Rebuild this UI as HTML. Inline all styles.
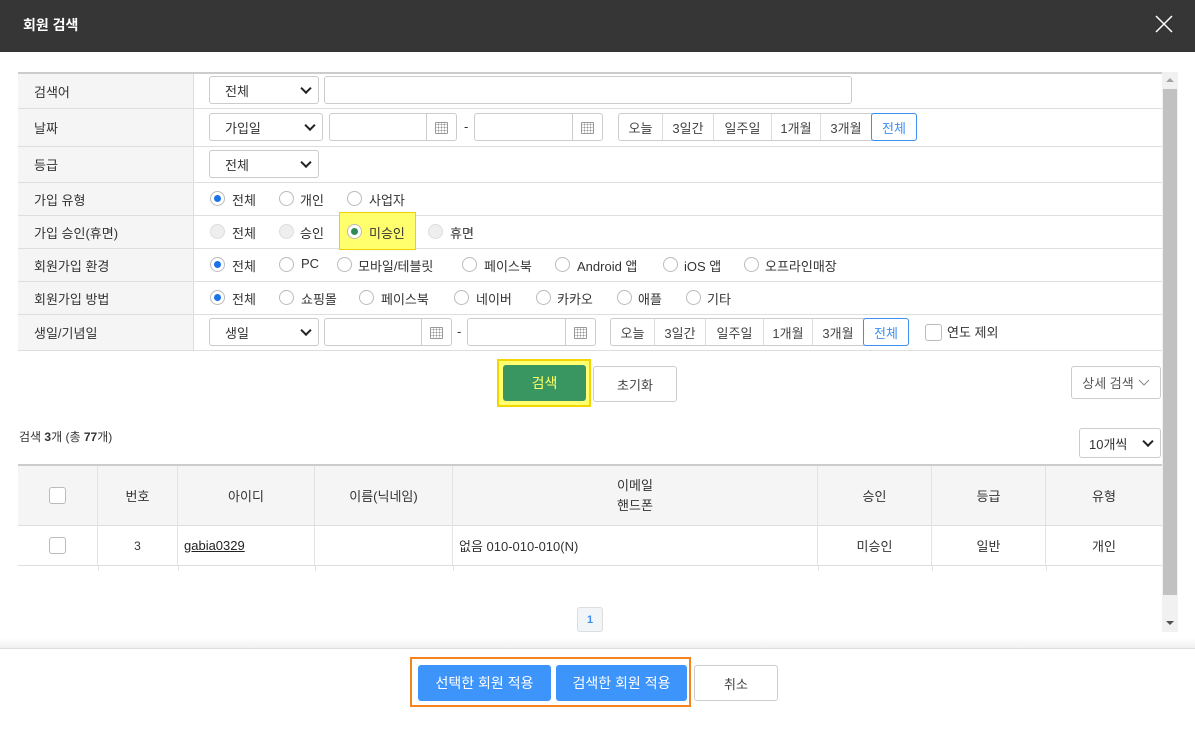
<!DOCTYPE html>
<html><head><meta charset="utf-8"><style>
*{box-sizing:border-box;margin:0;padding:0}
body{width:1195px;height:733px;position:relative;overflow:hidden;background:#fff;font-family:"Liberation Sans","Noto Sans CJK KR",sans-serif;font-size:13px;color:#333}
.a{position:absolute}
.hdr{left:0;top:0;width:1195px;height:52px;background:#363636}
.lbl{left:18px;width:176px;background:#f5f5f5;padding-left:16px;display:flex;align-items:center;border-right:1px solid #ddd}
.line{left:18px;width:1144px;height:1px;background:#dedede}
.sel{border:1px solid #ccc;border-radius:3px;background:#fff;display:flex;align-items:center;padding-left:15px}
.sel:after{content:"";position:absolute;right:8px;top:50%;width:6px;height:6px;border-right:2px solid #222;border-bottom:2px solid #222;transform:translateY(-70%) rotate(45deg)}
.inp{border:1px solid #ccc;border-radius:3px;background:#fff}
.cal{position:absolute;right:0;top:0;bottom:0;width:30px;border-left:1px solid #ccc}
.cal i{position:absolute;left:8px;top:8px;width:13px;height:12px;border:1px solid #999;border-radius:1px;background:radial-gradient(circle,#999 0.8px,transparent 1px) 1px 3px/3px 3px}
.grp{display:flex;border:1px solid #ccc;border-radius:3px;height:28px}
.grp span{display:flex;align-items:center;justify-content:center;border-right:1px solid #ddd;color:#444}
.grp span:last-child{border:1px solid #3d8ff0;color:#3d8ff0;border-radius:3px;margin:-1px}
.r{width:15px;height:15px;border:1px solid #bbb;border-radius:50%;background:#fff}
.r.on{border-color:#bbb}
.r.on:after{content:"";position:absolute;left:3px;top:3px;width:7px;height:7px;border-radius:50%;background:#1a73e8}
.r.g:after{background:#2e8b57}
.r.dis{background:#eee;border-color:#ddd}
.t{white-space:nowrap}
.btn{border:1px solid #ccc;border-radius:3px;background:#fff;display:flex;align-items:center;justify-content:center}
.th{top:466px;height:59px;display:flex;align-items:center;justify-content:center;border-right:1px solid #e3e3e3;background:#f5f5f5;color:#333}
.td{top:526px;height:39px;display:flex;align-items:center;justify-content:center;border-right:1px solid #e3e3e3}
.cb{width:17px;height:17px;border:1px solid #bbb;border-radius:3px;background:#fff}
</style></head><body>
<div class="a hdr"></div>
<div class="a t" style="left:23px;top:15px;color:#fff;font-weight:bold;font-size:14px">회원 검색</div>
<svg class="a" style="left:1155px;top:15px" width="18" height="18"><path d="M1 1L17 17M17 1L1 17" stroke="#fff" stroke-width="1.5"/></svg>

<!-- scrollbar -->
<div class="a" style="left:1162px;top:72px;width:16px;height:560px;background:#f1f1f1"></div>
<div class="a" style="left:1163px;top:89px;width:14px;height:506px;background:#c1c1c1"></div>
<svg class="a" style="left:1165px;top:77px" width="10" height="6"><path d="M1 5L5 1L9 5Z" fill="#a3a3a3"/></svg>
<svg class="a" style="left:1165px;top:620px" width="10" height="6"><path d="M1 1L5 5L9 1Z" fill="#505050"/></svg>

<!-- form table -->
<div class="a" style="left:18px;top:72px;width:1144px;height:2px;background:#ccc"></div>
<div class="a lbl" style="top:74px;height:34px">검색어</div>
<div class="a lbl" style="top:109px;height:37px">날짜</div>
<div class="a lbl" style="top:147px;height:35px">등급</div>
<div class="a lbl" style="top:183px;height:32px">가입 유형</div>
<div class="a lbl" style="top:216px;height:32px">가입 승인(휴면)</div>
<div class="a lbl" style="top:249px;height:32px">회원가입 환경</div>
<div class="a lbl" style="top:282px;height:32px">회원가입 방법</div>
<div class="a lbl" style="top:315px;height:35px">생일/기념일</div>
<div class="a line" style="top:108px"></div>
<div class="a line" style="top:146px"></div>
<div class="a line" style="top:182px"></div>
<div class="a line" style="top:215px"></div>
<div class="a line" style="top:248px"></div>
<div class="a line" style="top:281px"></div>
<div class="a line" style="top:314px"></div>
<div class="a line" style="top:350px"></div>

<div class="a sel" style="left:209px;top:76px;width:110px;height:28px">전체</div>
<div class="a inp" style="left:324px;top:76px;width:528px;height:28px"></div>

<div class="a sel" style="left:209px;top:113px;width:114px;height:28px">가입일</div>
<div class="a inp" style="left:329px;top:113px;width:128px;height:28px"><div class="cal"><i></i></div></div>
<div class="a" style="left:464px;top:119px">-</div>
<div class="a inp" style="left:474px;top:113px;width:129px;height:28px"><div class="cal"><i></i></div></div>
<div class="a grp" style="left:618px;top:113px;width:299px"><span style="width:44px">오늘</span><span style="width:51px">3일간</span><span style="width:58px">일주일</span><span style="width:49px">1개월</span><span style="width:51px">3개월</span><span style="width:46px">전체</span></div>

<div class="a sel" style="left:209px;top:150px;width:110px;height:28px">전체</div>

<!-- row 4 -->
<div class="a r on" style="left:210px;top:191px"></div><div class="a t" style="left:232px;top:190px">전체</div>
<div class="a r" style="left:279px;top:191px"></div><div class="a t" style="left:300px;top:190px">개인</div>
<div class="a r" style="left:347px;top:191px"></div><div class="a t" style="left:369px;top:190px">사업자</div>
<!-- row 5 -->
<div class="a r dis" style="left:210px;top:224px"></div><div class="a t" style="left:232px;top:223px">전체</div>
<div class="a r dis" style="left:279px;top:224px"></div><div class="a t" style="left:300px;top:223px">승인</div>
<div class="a" style="left:339px;top:212px;width:77px;height:38px;border:1px solid #f0d000;background:#ffff6e"></div>
<div class="a r on g" style="left:347px;top:224px"></div><div class="a t" style="left:369px;top:223px">미승인</div>
<div class="a r dis" style="left:428px;top:224px"></div><div class="a t" style="left:450px;top:223px">휴면</div>
<!-- row 6 -->
<div class="a r on" style="left:210px;top:257px"></div><div class="a t" style="left:232px;top:256px">전체</div>
<div class="a r" style="left:279px;top:257px"></div><div class="a t" style="left:301px;top:256px">PC</div>
<div class="a r" style="left:337px;top:257px"></div><div class="a t" style="left:358px;top:256px">모바일/테블릿</div>
<div class="a r" style="left:462px;top:257px"></div><div class="a t" style="left:484px;top:256px">페이스북</div>
<div class="a r" style="left:555px;top:257px"></div><div class="a t" style="left:577px;top:256px">Android 앱</div>
<div class="a r" style="left:663px;top:257px"></div><div class="a t" style="left:684px;top:256px">iOS 앱</div>
<div class="a r" style="left:744px;top:257px"></div><div class="a t" style="left:765px;top:256px">오프라인매장</div>
<!-- row 7 -->
<div class="a r on" style="left:210px;top:290px"></div><div class="a t" style="left:232px;top:289px">전체</div>
<div class="a r" style="left:279px;top:290px"></div><div class="a t" style="left:301px;top:289px">쇼핑몰</div>
<div class="a r" style="left:359px;top:290px"></div><div class="a t" style="left:381px;top:289px">페이스북</div>
<div class="a r" style="left:454px;top:290px"></div><div class="a t" style="left:476px;top:289px">네이버</div>
<div class="a r" style="left:536px;top:290px"></div><div class="a t" style="left:557px;top:289px">카카오</div>
<div class="a r" style="left:617px;top:290px"></div><div class="a t" style="left:638px;top:289px">애플</div>
<div class="a r" style="left:686px;top:290px"></div><div class="a t" style="left:707px;top:289px">기타</div>
<!-- row 8 -->
<div class="a sel" style="left:209px;top:318px;width:110px;height:28px">생일</div>
<div class="a inp" style="left:324px;top:318px;width:128px;height:28px"><div class="cal"><i></i></div></div>
<div class="a" style="left:457px;top:324px">-</div>
<div class="a inp" style="left:467px;top:318px;width:129px;height:28px"><div class="cal"><i></i></div></div>
<div class="a grp" style="left:610px;top:318px;width:299px"><span style="width:44px">오늘</span><span style="width:51px">3일간</span><span style="width:58px">일주일</span><span style="width:49px">1개월</span><span style="width:51px">3개월</span><span style="width:46px">전체</span></div>
<div class="a cb" style="left:925px;top:324px"></div><div class="a t" style="left:947px;top:322px">연도 제외</div>

<!-- buttons -->
<div class="a" style="left:497px;top:359px;width:94px;height:48px;border:2px solid #f2d600;background:#ffff70"></div>
<div class="a btn" style="left:503px;top:365px;width:83px;height:36px;background:#3a9660;border-color:#3a9660;color:#ffff66;font-size:14px">검색</div>
<div class="a btn" style="left:593px;top:366px;width:84px;height:36px;color:#444">초기화</div>
<div class="a btn" style="left:1071px;top:366px;width:90px;height:33px;color:#555">상세 검색 <svg width="12" height="8" style="margin-left:4px"><path d="M1 1L6 6L11 1" stroke="#888" fill="none"/></svg></div>

<div class="a t" style="left:19px;top:428px;font-size:12px">검색 <b>3</b>개 (총 <b>77</b>개)</div>
<div class="a sel" style="left:1079px;top:428px;width:82px;height:30px;padding-left:9px">10개씩</div>

<!-- results table -->
<div class="a" style="left:18px;top:464px;width:1144px;height:2px;background:#ccc"></div>
<div class="a th" style="left:18px;width:80px"><div class="cb"></div></div>
<div class="a th" style="left:98px;width:80px">번호</div>
<div class="a th" style="left:178px;width:137px">아이디</div>
<div class="a th" style="left:315px;width:138px">이름(닉네임)</div>
<div class="a th" style="left:453px;width:365px;flex-direction:column;line-height:20px">이메일<br>핸드폰</div>
<div class="a th" style="left:818px;width:114px">승인</div>
<div class="a th" style="left:932px;width:114px">등급</div>
<div class="a th" style="left:1046px;width:116px;border-right:0">유형</div>
<div class="a line" style="top:525px"></div>
<div class="a td" style="left:18px;width:80px"><div class="cb"></div></div>
<div class="a td" style="left:98px;width:80px;font-size:12px">3</div>
<div class="a td" style="left:178px;width:137px;justify-content:flex-start;padding-left:6px"><u style="color:#222">gabia0329</u></div>
<div class="a td" style="left:315px;width:138px"></div>
<div class="a td" style="left:453px;width:365px;justify-content:flex-start;padding-left:6px">없음 010-010-010(N)</div>
<div class="a td" style="left:818px;width:114px">미승인</div>
<div class="a td" style="left:932px;width:114px">일반</div>
<div class="a td" style="left:1046px;width:116px;border-right:0">개인</div>
<div class="a line" style="top:565px"></div>
<div class="a" style="left:98px;top:566px;width:1px;height:5px;background:#e3e3e3"></div>
<div class="a" style="left:178px;top:566px;width:1px;height:5px;background:#e3e3e3"></div>
<div class="a" style="left:315px;top:566px;width:1px;height:5px;background:#e3e3e3"></div>
<div class="a" style="left:453px;top:566px;width:1px;height:5px;background:#e3e3e3"></div>
<div class="a" style="left:818px;top:566px;width:1px;height:5px;background:#e3e3e3"></div>
<div class="a" style="left:932px;top:566px;width:1px;height:5px;background:#e3e3e3"></div>
<div class="a" style="left:1046px;top:566px;width:1px;height:5px;background:#e3e3e3"></div>

<div class="a btn" style="left:577px;top:607px;width:26px;height:25px;background:#f2f5f8;border-color:#ddd;color:#3d8ff0;font-size:11px;font-weight:bold">1</div>

<!-- footer -->
<div class="a" style="left:0;top:638px;width:1195px;height:10px;background:linear-gradient(#fff,#f0f0f0)"></div>
<div class="a" style="left:0;top:648px;width:1195px;height:1px;background:#ddd"></div>
<div class="a" style="left:410px;top:657px;width:281px;height:50px;border:2px solid #f5841f"></div>
<div class="a btn" style="left:418px;top:665px;width:133px;height:36px;background:#3d95fb;border-color:#3d95fb;color:#fff;font-size:14px">선택한 회원 적용</div>
<div class="a btn" style="left:556px;top:665px;width:131px;height:36px;background:#3d95fb;border-color:#3d95fb;color:#fff;font-size:14px">검색한 회원 적용</div>
<div class="a btn" style="left:694px;top:665px;width:84px;height:36px;color:#444">취소</div>
</body></html>
